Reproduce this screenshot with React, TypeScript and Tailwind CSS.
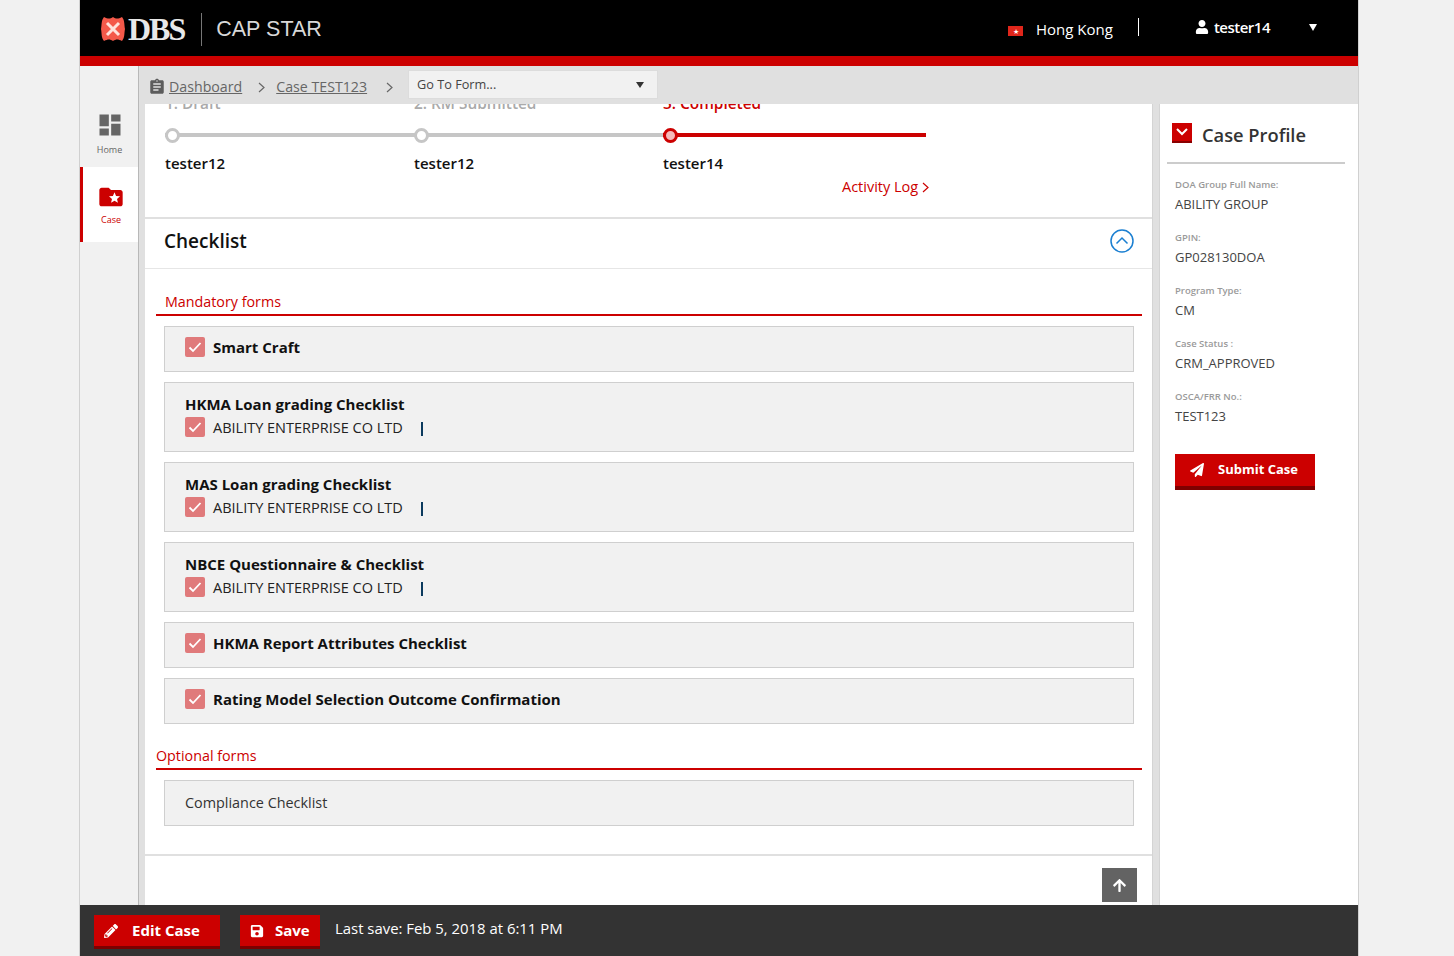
import React from 'react';
import { FaUser, FaPencilAlt, FaSave, FaPaperPlane, FaArrowUp } from 'react-icons/fa';
import { MdDashboard, MdFolderSpecial, MdAssignment } from 'react-icons/md';

const Check = () => (
  <span className="w-5 h-5 rounded-[2px] bg-[#e07a7b] flex items-center justify-center flex-shrink-0">
    <svg width="14" height="12" viewBox="0 0 14 12" fill="none">
      <path d="M1.5 6.5L5 10L12.5 2" stroke="#fff" strokeWidth="1.8" />
    </svg>
  </span>
);

const Chevron = ({ className }: { className?: string }) => (
  <svg width="7" height="11" viewBox="0 0 7 11" fill="none" stroke="currentColor" strokeWidth="1.2" className={className}>
    <path d="M1 1L6 5.5L1 10" />
  </svg>
);

const SimpleForm = ({ name }: { name: string }) => (
  <div className="h-[46px] border border-[#cfcfcf] bg-[#f1f1f1] pl-[20px] flex items-center gap-2 mt-[10px] pb-[5px]">
    <Check />
    <span className="text-[15px] font-bold text-[#111] mt-px">{name}</span>
  </div>
);

const EntityForm = ({ name }: { name: string }) => (
  <div className="h-[70px] border border-[#cfcfcf] bg-[#f1f1f1] pl-[20px] pt-[10px] mt-[10px]">
    <div className="text-[15px] font-bold text-[#111] leading-[23px]">{name}</div>
    <div className="flex items-center gap-2 h-[22px]">
      <Check />
      <span className="text-[14.5px] text-[#222] w-[200px] mt-px">ABILITY ENTERPRISE CO LTD</span>
      <span className="w-[2px] h-[14px] bg-[#0b3a5e] mt-[3px]" />
    </div>
  </div>
);

const Step = ({ num, user, active }: { num: string; user: string; active?: boolean }) => (
  <div className="w-[249px] flex-shrink-0">
    <div className={`text-[15.4px] font-semibold leading-[20px] h-[20px] ${active ? 'text-[#cc0000]' : 'text-[#aaa]'}`}>{num}</div>
    <div className="relative h-[17px] mt-[14px]">
      <div className={`absolute top-[5px] left-0 h-[4px] ${active ? 'w-[263px] bg-[#cc0000]' : 'w-[249px] bg-[#c6c6c6]'}`} />
      <div className={`absolute top-0 left-0 w-[15px] h-[15px] rounded-full border-[3px] ${active ? 'border-[#cc0000] bg-[#f6b8b8]' : 'border-[#c6c6c6] bg-white'}`} />
    </div>
    <div className="text-[15px] font-semibold text-[#111] leading-[20px] mt-[8px]">{user}</div>
  </div>
);

const ProfileField = ({ label, value }: { label: string; value: string }) => (
  <div className="h-[53px]">
    <div className="text-[9.5px] font-semibold text-[#9a9a9a] leading-[14px]">{label}</div>
    <div className="text-[13px] text-[#444] leading-[20px] mt-[2px]">{value}</div>
  </div>
);

export default function App() {
  return (
    <div className="h-screen overflow-hidden bg-[#f1f1f1] pl-[79px] pr-[95px] font-['Open_Sans',sans-serif]">
      <div className="h-full flex flex-col border-x border-[#d0d0d0]">
        {/* Header */}
        <header className="h-[66px] flex-shrink-0 bg-black border-b-[10px] border-[#cc0000] flex items-center justify-between">
          <div className="flex items-center ml-[19px] mt-[2px]">
            <svg width="28" height="28" viewBox="0 0 28 28">
              <path d="M5 2C9 4 11 4 14 2C17 4 19 4 23 2C26 6 25 9 26 14C25 19 26 22 23 26C19 24 17 24 14 26C11 24 9 24 5 26C2 22 3 19 2 14C3 9 2 6 5 2Z" fill="#f4594a" />
              <path d="M8 8L20 20M20 8L8 20" stroke="#ffe3dc" strokeWidth="3" />
            </svg>
            <span className="font-['Liberation_Serif',serif] text-[32px] font-bold text-[#e8e8e8] tracking-[-2px] leading-none ml-[1px]">DBS</span>
            <span className="w-px h-[33px] bg-[#777] ml-[17px]" />
            <span className="font-['Liberation_Sans',sans-serif] text-[21.5px] text-[#d8d8d8] ml-[14px]">CAP STAR</span>
          </div>
          <div className="flex items-center text-white">
            <span className="w-[15px] h-[10px] bg-[#e0261b] flex items-center justify-center text-[7px] leading-none mt-[6px]">★</span>
            <span className="text-[15px] ml-[13px] mt-[3px]">Hong Kong</span>
            <span className="w-px h-[18px] bg-white ml-[25px] -mt-[3px]" />
            <FaUser className="ml-[56px] -mt-[2px]" size={14} />
            <span className="text-[15px] font-semibold tracking-[-0.5px] ml-[5px] -mt-[1px]">tester14</span>
            <span className="ml-[39px] mr-[41px] -mt-[1px] w-0 h-0 border-x-[4.5px] border-x-transparent border-t-[7px] border-t-white" />
          </div>
        </header>

        <div className="flex-1 min-h-0 flex">
          {/* Left nav */}
          <nav className="w-[59px] flex-shrink-0 bg-[#f1f1f1] border-r border-[#b8b8b8]">
            <div className="h-[101px] flex flex-col items-center justify-end pb-[11px] pl-[1px] text-[#666]">
              <MdDashboard size={28} />
              <span className="text-[9px] mt-[5px] leading-[12px]">Home</span>
            </div>
            <div className="h-[75px] bg-white border-l-[3px] border-[#cc0000] flex flex-col items-center justify-center pl-[1px] text-[#cc0000]">
              <MdFolderSpecial size={28} />
              <span className="text-[9px] mt-[3px] leading-[12px]">Case</span>
            </div>
          </nav>

          <div className="flex-1 min-w-0 flex flex-col bg-[#e0e0e0]">
            {/* Breadcrumb */}
            <div className="h-[38px] flex-shrink-0 flex items-center pl-[9px] text-[14.2px] text-[#666]">
              <MdAssignment size={18} className="text-[#5c5c5c] mt-[4px]" />
              <span className="underline ml-[3px] mt-[4px]">Dashboard</span>
              <Chevron className="ml-[16px] mt-[4px]" />
              <span className="underline ml-[11px] mt-[4px]">Case TEST123</span>
              <Chevron className="ml-[19px] mt-[4px]" />
              <div className="ml-[15px] w-[250px] h-[29px] -mt-[1px] bg-[#f1f1f1] border border-[#dcdcdc] flex items-center justify-between pl-2 pr-[13px] text-[12.7px] text-[#444]">
                <span>Go To Form...</span>
                <span className="w-0 h-0 border-x-[4px] border-x-transparent border-t-[6px] border-t-[#333]" />
              </div>
            </div>

            <div className="flex-1 min-h-0 flex">
              {/* Main column */}
              <main className="w-[1008px] ml-[6px] flex-shrink-0 bg-white border-r border-[#d4d4d4] overflow-hidden">
                <div className="h-[123px] -mt-[10px] pl-[20px]">
                  <div className="flex">
                    <Step num="1. Draft" user="tester12" />
                    <Step num="2. RM Submitted" user="tester12" />
                    <Step num="3. Completed" user="tester14" active />
                  </div>
                  <div className="ml-[677px] mt-[4px] flex items-center gap-[4px] text-[14.5px] text-[#cc0000] leading-[20px]">
                    Activity Log
                    <Chevron className="mt-[1px]" />
                  </div>
                </div>
                <div className="border-t-2 border-[#e0e0e0] h-[52px] flex items-center justify-between border-b border-b-[#e6e6e6] pl-[19px] pr-[18px] pb-[5px]">
                  <h2 className="text-[19px] font-semibold text-[#111]">Checklist</h2>
                  <svg width="24" height="24" viewBox="0 0 24 24" fill="none" stroke="#1b7fd1" strokeWidth="1.5">
                    <circle cx="12" cy="12" r="11" />
                    <path d="M6.5 14.5L12 9L17.5 14.5" />
                  </svg>
                </div>
                <section className="border-b-2 border-[#e0e0e0] h-[587px] pt-[23px] pl-[11px] pr-[10px]">
                  <div className="text-[14.3px] text-[#cc0000] leading-[20px] pl-[9px] pb-[2px] border-b-2 border-[#cc0000]">Mandatory forms</div>
                  <div className="px-2">
                    <SimpleForm name="Smart Craft" />
                    <EntityForm name="HKMA Loan grading Checklist" />
                    <EntityForm name="MAS Loan grading Checklist" />
                    <EntityForm name="NBCE Questionnaire & Checklist" />
                    <SimpleForm name="HKMA Report Attributes Checklist" />
                    <SimpleForm name="Rating Model Selection Outcome Confirmation" />
                  </div>
                  <div className="text-[14.3px] text-[#cc0000] leading-[20px] mt-[22px] pb-[2px] border-b-2 border-[#cc0000]">Optional forms</div>
                  <div className="px-2">
                    <div className="h-[46px] border border-[#cfcfcf] bg-[#f1f1f1] pl-[20px] flex items-center mt-[10px] text-[14.4px] text-[#333]">Compliance Checklist</div>
                  </div>
                </section>
                <div className="flex justify-end pr-[15px] pt-[12px]">
                  <div className="w-[35px] h-[34px] bg-[#636363] flex items-center justify-center text-white">
                    <FaArrowUp size={15} />
                  </div>
                </div>
              </main>

              {/* Case profile */}
              <aside className="w-[199px] ml-[6px] flex-shrink-0 bg-white border-l border-[#d4d4d4] pt-[19px] pl-[7px]">
                <div className="w-[178px] h-[41px] border-b-2 border-[#cccccc] flex items-start gap-[10px] pl-[5px]">
                  <span className="w-5 h-5 bg-[#cc0000] border-b-2 border-[#8a0000] flex items-center justify-center">
                    <svg width="12" height="8" viewBox="0 0 12 8" fill="none"><path d="M1 1L6 6L11 1" stroke="#fff" strokeWidth="2" /></svg>
                  </span>
                  <span className="text-[18.3px] font-semibold text-[#333] leading-[24px]">Case Profile</span>
                </div>
                <div className="pl-[8px] pt-[14px]">
                  <ProfileField label="DOA Group Full Name:" value="ABILITY GROUP" />
                  <ProfileField label="GPIN:" value="GP028130DOA" />
                  <ProfileField label="Program Type:" value="CM" />
                  <ProfileField label="Case Status :" value="CRM_APPROVED" />
                  <ProfileField label="OSCA/FRR No.:" value="TEST123" />
                  <div className="w-[140px] h-[36px] mt-[11px] bg-[#cc0000] border-b-[4px] border-[#800000] flex items-center text-white pl-[15px] gap-[14px]">
                    <FaPaperPlane size={14} />
                    <span className="text-[13px] font-bold">Submit Case</span>
                  </div>
                </div>
              </aside>
            </div>
          </div>
        </div>

        {/* Footer */}
        <footer className="h-[51px] flex-shrink-0 bg-[#333] flex items-start pl-[14px] pt-[10px] text-white">
          <div className="w-[126px] h-[34px] bg-[#cc0000] border-b-[3px] border-[#7d0000] flex items-center pl-[10px] gap-[14px]">
            <FaPencilAlt size={14} />
            <span className="text-[15px] font-bold">Edit Case</span>
          </div>
          <div className="w-[80px] h-[34px] ml-[20px] bg-[#cc0000] border-b-[3px] border-[#7d0000] flex items-center pl-[10px] gap-[11px]">
            <FaSave size={14} />
            <span className="text-[15px] font-bold">Save</span>
          </div>
          <span className="text-[14.9px] ml-[15px] mt-[2px]">Last save: Feb 5, 2018 at 6:11 PM</span>
        </footer>
      </div>
    </div>
  );
}
